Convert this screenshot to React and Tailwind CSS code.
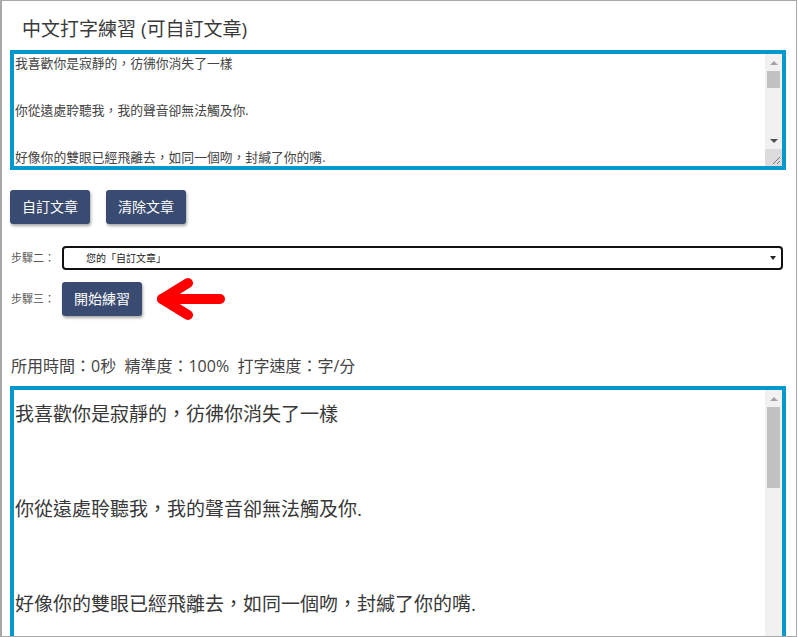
import React from "react";

const FONT = "font-['Open_Sans','Noto_Sans_CJK_TC',sans-serif]";

function UpArrow({ color = "border-b-[#a3a3a3]" }) {
  return <div className={`w-0 h-0 border-x-[4px] border-x-transparent border-b-[4px] ${color}`} />;
}
function DownArrow({ color = "border-t-[#505050]" }) {
  return <div className={`w-0 h-0 border-x-[4px] border-x-transparent border-t-[4px] ${color}`} />;
}

function TopScrollbar() {
  return (
    <div className="w-[17px] shrink-0 flex flex-col bg-[#f1f1f1]">
      <div className="h-[17px] flex items-center justify-center">
        <UpArrow />
      </div>
      <div className="h-[17px] mx-[2px] bg-[#c1c1c1]" />
      <div className="flex-1" />
      <div className="h-[17px] flex items-center justify-center">
        <DownArrow />
      </div>
      <div className="h-[17px] bg-[#dcdcdc] relative">
        <svg width="17" height="17" className="absolute inset-0">
          <line x1="15" y1="8" x2="8" y2="15" stroke="#777" strokeWidth="1" />
          <line x1="15" y1="12" x2="12" y2="15" stroke="#777" strokeWidth="1" />
        </svg>
      </div>
    </div>
  );
}

function BottomScrollbar() {
  return (
    <div className="w-[17px] shrink-0 flex flex-col bg-[#f1f1f1]">
      <div className="h-[17px] flex items-center justify-center">
        <UpArrow />
      </div>
      <div className="h-[81px] mx-[2px] bg-[#c1c1c1]" />
      <div className="flex-1" />
    </div>
  );
}

function Btn({ children }) {
  return (
    <button className="w-[80px] h-[34px] bg-[#394b70] text-white text-[14px] leading-[20px] rounded-[3px] shadow-[1px_2px_3px_rgba(0,0,0,0.35)] flex items-center justify-center">
      {children}
    </button>
  );
}

const lines = [
  "我喜歡你是寂靜的，彷彿你消失了一樣",
  "",
  "",
  "你從遠處聆聽我，我的聲音卻無法觸及你.",
  "",
  "",
  "好像你的雙眼已經飛離去，如同一個吻，封緘了你的嘴.",
  "",
  "",
  "如同所有的事物充滿了我的靈魂",
];

export default function App() {
  return (
    <div className={`w-[798px] h-[637px] bg-white ${FONT}`}>
      <div className="w-[797px] h-[637px] border-l-2 border-t border-r border-b border-[#a8a8a8] overflow-hidden pl-[8px] pr-[10px] flex flex-col">
        <div className="mt-[13px] ml-[12px] h-[31px] leading-[31px] text-[19px] text-[#3a3a3a]">
          中文打字練習 (可自訂文章)
        </div>

        <div className="mt-[5px] h-[120px] shrink-0 border-[4px] border-[#0399cf] flex bg-white">
          <div className="flex-1 overflow-hidden pt-[2px] pl-[1px] text-[12.8px] leading-[15.6px] text-[#444]">
            {lines.map((l, i) => (
              <div key={i} className="h-[15.6px] whitespace-nowrap">{l}</div>
            ))}
          </div>
          <TopScrollbar />
        </div>

        <div className="mt-[20px] h-[34px] flex gap-[16px]">
          <Btn>自訂文章</Btn>
          <Btn>清除文章</Btn>
        </div>

        <div className="mt-[22px] h-[24px] flex items-center">
          <div className="w-[52px] text-[11px] leading-[16px] text-[#555] pl-[1px]">步驟二：</div>
          <div className="w-[721px] h-[24px] border-2 border-[#111] rounded-[4px] flex items-center pl-[22px] pr-[5px]">
            <span className="flex-1 text-[10px] leading-[14px] text-[#222]">您的「自訂文章」</span>
            <div className="w-0 h-0 border-x-[3px] border-x-transparent border-t-[4px] border-t-[#222]" />
          </div>
        </div>

        <div className="mt-[12px] h-[34px] flex items-center">
          <div className="w-[52px] text-[11px] leading-[16px] text-[#555] pl-[1px]">步驟三：</div>
          <Btn>開始練習</Btn>
          <svg width="76" height="44" viewBox="0 0 76 44" className="ml-[10px] my-[-5px] shrink-0">
            <g stroke="#ff0000" strokeWidth="10" strokeLinecap="round" strokeLinejoin="round" fill="none">
              <path d="M68 22 H10" />
              <path d="M36 6 L10 22 L36 38" />
            </g>
          </svg>
        </div>

        <div className="mt-[38px] h-[25px] leading-[25px] text-[16px] text-[#444] pl-[1px] whitespace-pre">
          所用時間：0秒  精準度：100%  打字速度：字/分
        </div>

        <div className="mt-[7px] h-[300px] shrink-0 border-[4px] border-[#0399cf] flex bg-white">
          <div className="flex-1 overflow-hidden pt-[9px] pl-[1px] text-[19px] leading-[31.7px] text-[#383838]">
            {lines.map((l, i) => (
              <div key={i} className="h-[31.7px] whitespace-nowrap">{l}</div>
            ))}
          </div>
          <BottomScrollbar />
        </div>
      </div>
    </div>
  );
}
